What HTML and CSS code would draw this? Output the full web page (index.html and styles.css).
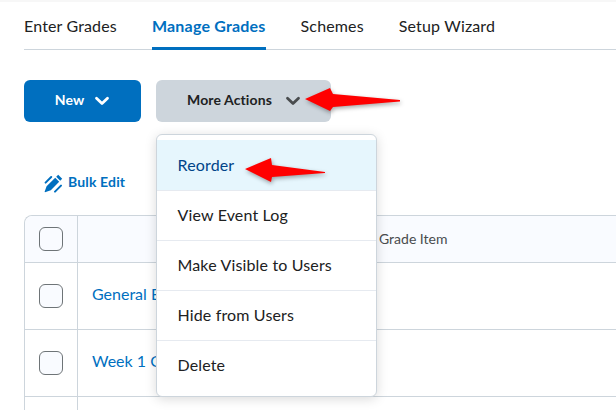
FILE: index.html
```html
<!DOCTYPE html>
<html lang="en">
<head>
<meta charset="utf-8">
<title>Manage Grades</title>
<link rel="stylesheet" href="styles.css">
</head>
<body>
<div class="page">
  <nav class="tabs">
    <a class="tab">Enter Grades</a>
    <a class="tab active">Manage Grades</a>
    <a class="tab">Schemes</a>
    <a class="tab">Setup Wizard</a>
  </nav>
  <div class="actions">
    <button class="btn primary">New
      <svg class="chev" width="16" height="10" viewBox="0 0 16 10"><path d="M2.5 2.2L8 7.5l5.5-5.3" fill="none" stroke="currentColor" stroke-width="2.8" stroke-linecap="round" stroke-linejoin="round"/></svg>
    </button>
    <button class="btn secondary">More Actions
      <svg class="chev" width="16" height="10" viewBox="0 0 16 10"><path d="M2.5 2.2L8 7.5l5.5-5.3" fill="none" stroke="currentColor" stroke-width="2.8" stroke-linecap="round" stroke-linejoin="round"/></svg>
    </button>
  </div>
  <div class="bulk">
    <svg width="19" height="19" viewBox="0 0 19 19"><path d="M14.2.8l4 4-2 2-4-4zM11.2 3.8l4 4-8.4 8.4-5.8 2-.4-.4 2-5.6z" fill="#006fbf"/><path d="M1.6 8.6L7.2 3M11 17.6l6-6" stroke="#006fbf" stroke-width="2" stroke-linecap="round"/></svg>
    <span>Bulk Edit</span>
  </div>
  <div class="grid">
    <div class="cell check head"><span class="box"></span></div>
    <div class="cell head title">Grade Item</div>
    <div class="cell check"><span class="box"></span></div>
    <div class="cell"><a class="link">General B</a></div>
    <div class="cell check"><span class="box"></span></div>
    <div class="cell"><a class="link">Week 1 Q</a></div>
    <div class="cell check"></div>
    <div class="cell"></div>
  </div>
</div>
<ul class="menu">
  <li class="item current">Reorder</li>
  <li class="item">View Event Log</li>
  <li class="item">Make Visible to Users</li>
  <li class="item">Hide from Users</li>
  <li class="item">Delete</li>
</ul>
<svg class="arrow arrow-more" width="105" height="35" viewBox="0 0 105 35"><path d="M5 19L30 8l3 6 67 6v1.500l-67 5.500-3 4z" fill="#f00"/></svg>
<svg class="arrow arrow-reorder" width="90" height="35" viewBox="0 0 90 35"><path d="M5 17L31 6l1 7 53 7v1l-53 4-1 5z" fill="#f00"/></svg>
</body>
</html>
```
FILE: styles.css
```css
* { box-sizing: border-box; }
html, body { margin: 0; padding: 0; }
body {
  width: 616px;
  height: 410px;
  overflow: hidden;
  background: #fff;
  font-family: Lato, sans-serif;
  color: #202122;
  position: relative;
}
.page { padding-left: 24px; border-top: 2px solid #f7f7f7; }
.tabs {
  display: flex;
  gap: 35px;
  height: 48px;
  border-bottom: 1px solid #cdd5dc;
}
.tab {
  font-size: 16px;
  line-height: 20px;
  padding-top: 14px;
  height: 47px;
  letter-spacing: 0.15px;
}
.tab.active {
  color: #006fbf;
  font-weight: 700;
  border-bottom: 3px solid #006fbf;
  height: 48px;
  letter-spacing: 0.2px;
}
.actions { display: flex; gap: 15px; margin-top: 30px; }
.btn {
  height: 42px;
  border: 0;
  border-radius: 6px;
  font: 700 14px Lato, sans-serif;
  letter-spacing: 0.1px;
  line-height: 38px;
  display: flex;
  align-items: center;
  justify-content: center;
  padding: 0 0 3px;
}
.chev { margin-left: 10px; margin-top: 3px; }
.primary { width: 117px; background: #006fbf; color: #fff; }
.secondary { width: 175px; background: #cdd5dc; color: #202122; padding-right: 1px; }
.secondary .chev { color: #494c4e; margin-left: 13px; margin-right: -2px; }
.bulk {
  display: flex;
  align-items: center;
  gap: 5px;
  margin: 50px 0 0 20px;
  height: 22px;
  color: #006fbf;
  font-size: 14px;
  font-weight: 700;
}
.bulk span { margin-top: -3px; letter-spacing: 0.15px; }
.grid {
  display: grid;
  grid-template-columns: 53px 1fr;
  grid-template-rows: 47px 67px 67px 30px;
  margin-top: 21px;
  border-top: 1px solid #cdd5dc;
  border-left: 1px solid #cdd5dc;
  border-top-left-radius: 8px;
  width: 600px;
}
.cell {
  border-bottom: 1px solid #cdd5dc;
  display: flex;
  align-items: center;
  padding-left: 14px;
  min-width: 0;
}
.check {
  border-right: 1px solid #cdd5dc;
  justify-content: center;
  padding: 0;
}
.head { background: #f9fbff; }
.head.check { border-top-left-radius: 8px; }
.title { font-size: 14px; color: #494c4e; padding: 0 0 2px 301px; }
.box {
  width: 24px;
  height: 24px;
  background: #f9fbff;
  border: 1px solid #6e7477;
  border-radius: 6px;
}
.link {
  color: #006fbf;
  font-size: 16px;
  margin-top: -6px;
  white-space: nowrap;
}
.menu {
  position: absolute;
  left: 156px;
  top: 134px;
  width: 221px;
  height: 263px;
  margin: 0;
  padding: 5px 0 0;
  list-style: none;
  background: #fff;
  border: 1px solid #cdd5dc;
  border-radius: 6px;
  box-shadow: 0 2px 12px rgba(0, 0, 0, 0.15);
}
.item {
  height: 50px;
  padding: 0 0 3px 20.5px;
  display: flex;
  align-items: center;
  font-size: 16px;
  letter-spacing: 0.15px;
  border-bottom: 1px solid #e6eaf0;
}
.item:last-child { border-bottom: 0; }
.item.current { height: 51px; padding-bottom: 1px; background: #e6f6fd; color: #004489; }
.arrow {
  position: absolute;
  filter: drop-shadow(1px 2px 2px rgba(0, 0, 0, 0.35));
}
.arrow-more { left: 300px; top: 80px; }
.arrow-reorder { left: 240px; top: 152px; }
```
